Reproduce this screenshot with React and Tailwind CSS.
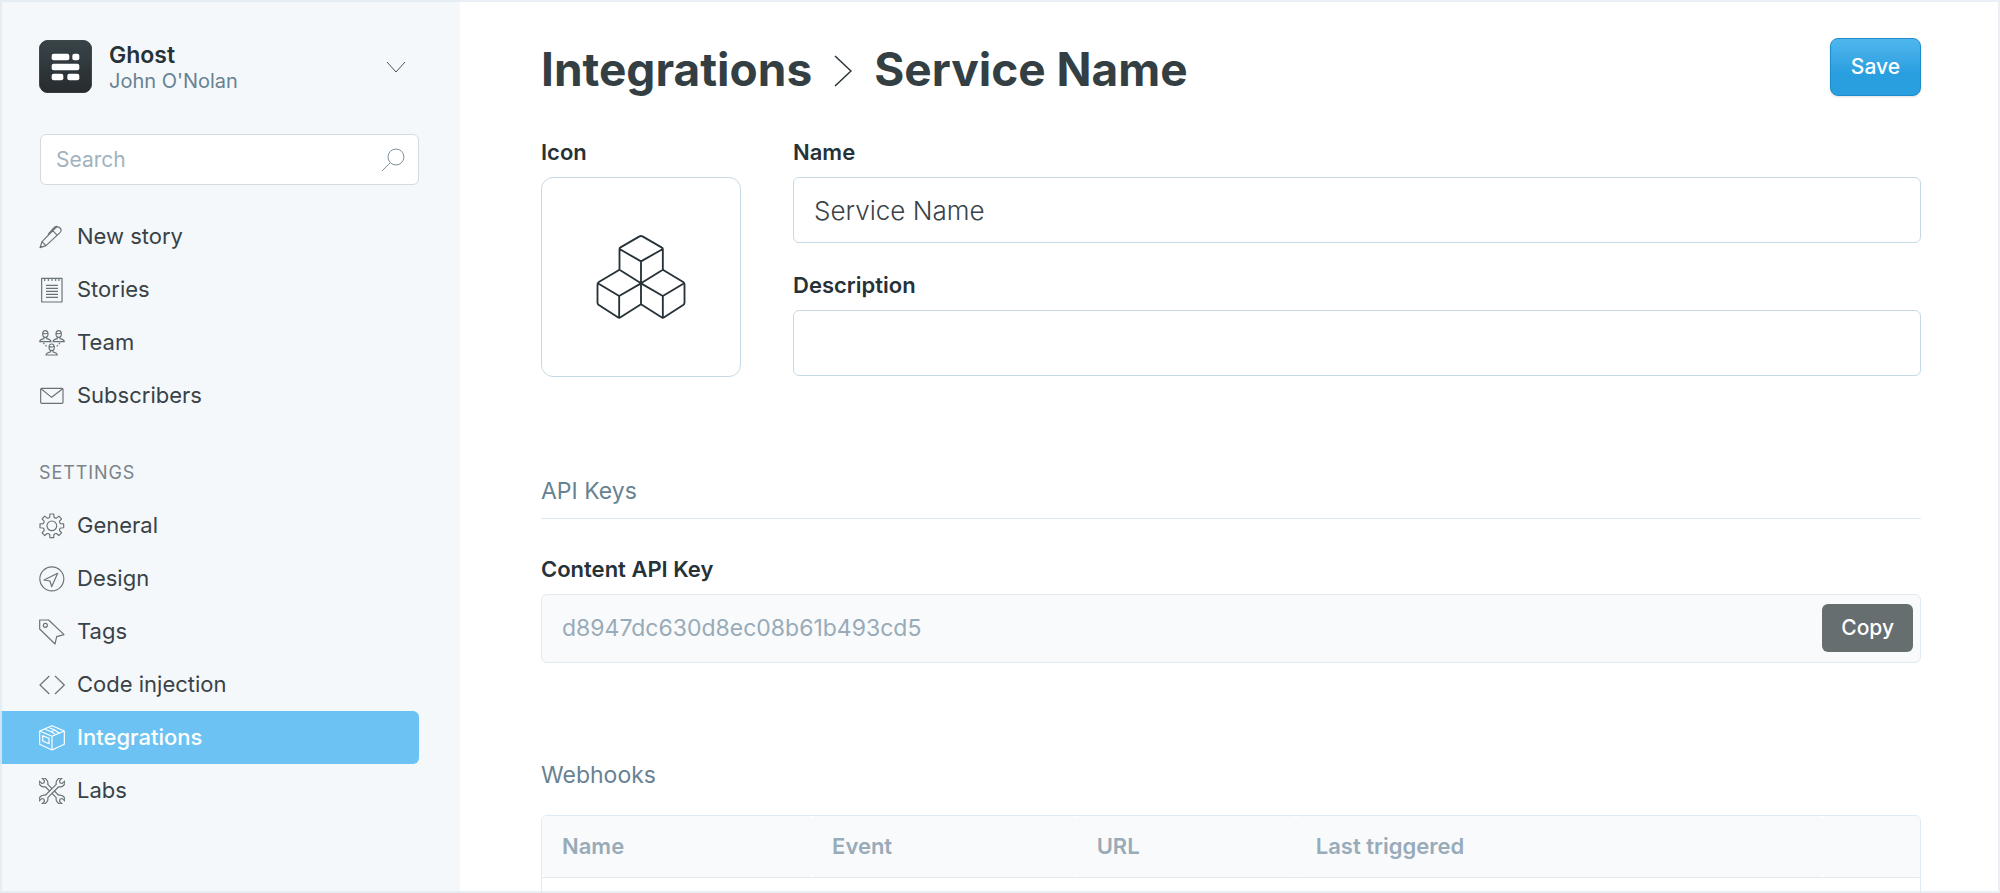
import React from "react";

const gearPath = (() => {
  const c = 38.5;
  const steps = [];
  for (let i = 0; i < 8; i++) {
    const a = (i * Math.PI) / 4;
    const pt = (r, d) =>
      `${(c + r * Math.sin(a + d)).toFixed(1)} ${(c - r * Math.cos(a + d)).toFixed(1)}`;
    steps.push(
      `${i ? "L" : "M"}${pt(27, -0.24)}L${pt(36, -0.16)}L${pt(36, 0.16)}L${pt(27, 0.24)}Q${pt(24, 0.39)} ${pt(27, 0.545)}`
    );
  }
  return steps.join("") + "Z";
})();

const person = (x, y) => (
  <g transform={`translate(${x} ${y})`}>
    <ellipse cx="0" cy="-6" rx="8" ry="10" />
    <path d="M-8 -8Q0 -5 8 -9M-4 4V8Q-16 10 -17 17H17Q16 10 4 8V4" />
  </g>
);

const wrench =
  "M-5 -23C-15 -29 -15 -43 -6 -49V-38L0 -34L6 -38V-49C15 -43 15 -29 5 -23V23C15 29 15 43 6 49V38L0 34L-6 38V49C-15 43 -15 29 -5 23Z";

const drawings = {
  pen: (
    <path d="M3 71L9 53L49 12Q56 5 63 12Q70 19 63 26L21 65ZM9 53L21 65M41 20L55 34M27 31L45 11Q50 5 57 8M3 71L8 66" />
  ),
  notebook: (
    <path d="M8 4H69V75H8ZM17 4V12M28 4V12M39 4V12M50 4V12M60 4V12M21 25H57M21 34H57M21 43H57M21 52H57M21 61H57" />
  ),
  team: (
    <>
      {person(19, 18)}
      {person(59, 18)}
      {person(38, 58)}
      <path d="M13 39L23 49M63 39L53 49" strokeDasharray="5 4" />
    </>
  ),
  mail: (
    <>
      <rect x="5" y="16" width="67" height="45" rx="3" />
      <path d="M7 18L38 43L70 18" />
    </>
  ),
  gear: (
    <>
      <path d={gearPath} />
      <circle cx="38.5" cy="38.5" r="14.5" />
    </>
  ),
  compass: (
    <>
      <circle cx="38.5" cy="38.5" r="36" />
      <path d="M56 22L15 42L33 45L38 62Z" />
    </>
  ),
  tag: (
    <>
      <path d="M2 3H29L75 47L53 53L48 75L2 30Z" />
      <circle cx="19" cy="19" r="6" />
    </>
  ),
  code: <path d="M31 12L3 39L31 66M48 12L76 39L48 66" />,
  box: (
    <path d="M39 2L76 18V58L39 75L2 58V18ZM2 18L39 34L76 18M39 34V75M17 12L37 20L50 29M28 7L47 15L61 25M37 20L47 15M11 32L30 40V56L11 48Z" />
  ),
  tools: (
    <>
      <path d={wrench} transform="translate(39 39) rotate(-45)" />
      <path d={wrench} transform="translate(39 39) rotate(45)" className="fill-[#f4f8fb]" />
    </>
  ),
};

function NavIcon({ name }) {
  return (
    <svg
      viewBox="0 0 78 78"
      className="size-[26px] shrink-0"
      fill="none"
      stroke="currentColor"
      strokeWidth="3.5"
      strokeLinejoin="round"
      aria-hidden="true"
    >
      {drawings[name]}
    </svg>
  );
}

function NavItem({ icon, label, active }) {
  return (
    <li>
      <a
        href="#"
        aria-current={active ? "page" : undefined}
        className={
          active
            ? "flex h-[53px] items-center gap-3 rounded-r-md bg-[#6cc3f3] pl-[39px] font-medium text-white"
            : "flex h-[53px] items-center gap-3 pl-[39px] text-[#394247]"
        }
      >
        <span className={active ? "text-white" : "text-[#697277]"}>
          <NavIcon name={icon} />
        </span>
        {label}
      </a>
    </li>
  );
}

const mainNav = [
  ["pen", "New story"],
  ["notebook", "Stories"],
  ["team", "Team"],
  ["mail", "Subscribers"],
];

const settingsNav = [
  ["gear", "General"],
  ["compass", "Design"],
  ["tag", "Tags"],
  ["code", "Code injection"],
  ["box", "Integrations"],
  ["tools", "Labs"],
];

function Sidebar() {
  return (
    <aside className="w-[460px] shrink-0 bg-[#f4f8fb] pr-[41px] pt-[39px] text-[22px]">
      <button type="button" className="flex w-full items-center pr-[13px] pl-[39px] text-left">
        <svg viewBox="0 0 159 159" className="size-[53px] shrink-0" aria-hidden="true">
          <defs>
            <linearGradient id="logo" x1="0" y1="0" x2="0" y2="1">
              <stop offset="0" stopColor="#394448" />
              <stop offset="1" stopColor="#262b2f" />
            </linearGradient>
          </defs>
          <rect x="1" y="1" width="157" height="157" rx="26" fill="url(#logo)" stroke="#1c2225" strokeWidth="2" />
          <g fill="#fff">
            <rect x="38" y="41" width="53" height="20" rx="6" />
            <rect x="100" y="41" width="21" height="20" rx="6" />
            <rect x="38" y="71" width="83" height="20" rx="6" />
            <rect x="38" y="101" width="35" height="20" rx="6" />
            <rect x="85" y="101" width="36" height="20" rx="6" />
          </g>
        </svg>
        <span className="ml-[17px] grow pt-[3px]">
          <span className="block text-[23px] leading-[26px] font-semibold text-[#263238]">Ghost</span>
          <span className="block text-[20px] leading-[26px] text-[#688292]">John O'Nolan</span>
        </span>
        <svg viewBox="0 0 20 12" className="h-3 w-5" fill="none" stroke="#4a5459" aria-hidden="true">
          <path d="M1 1L10 11L19 1" />
        </svg>
      </button>

      <div className="mt-[40px] ml-10 flex h-[51px] items-center rounded-md border border-[#d5dbdf] bg-white pr-[13px] pl-[15px]">
        <input
          type="text"
          aria-label="Search"
          placeholder="Search"
          className="min-w-0 grow text-[21px] outline-none placeholder:text-[#a1b3bf]"
        />
        <svg viewBox="0 0 24 24" className="size-6" fill="none" stroke="#7d8f9b" aria-hidden="true">
          <circle cx="15" cy="9" r="8" />
          <path d="M9 15L1 23" />
        </svg>
      </div>

      <nav className="mt-[25px]">
        <ul>
          {mainNav.map(([icon, label]) => (
            <NavItem key={label} icon={icon} label={label} />
          ))}
        </ul>
        <h2 className="mt-[38px] mb-[13px] pl-[39px] text-[18px] leading-[26px] tracking-wider text-[#7a8388] uppercase">
          Settings
        </h2>
        <ul>
          {settingsNav.map(([icon, label]) => (
            <NavItem key={label} icon={icon} label={label} active={label === "Integrations"} />
          ))}
        </ul>
      </nav>
    </aside>
  );
}

function CubesIcon() {
  return (
    <svg
      viewBox="228.5 226 270 252"
      className="h-[84px] w-[90px]"
      fill="none"
      stroke="#263238"
      strokeWidth="5.5"
      strokeLinejoin="round"
      aria-hidden="true"
    >
      <path d="M299 268Q299 265 302 263L359 230Q363.500 228 368 230L425 263Q429 265 429 268L363.500 305ZM299 268V330L363.500 371L429 330V268M363.500 305V371" />
      <path d="M299 330L237 367Q233 370 233 374V429Q233 433 237 436L294 473Q298 476 302 473L363.500 434V371L298 409L234 371M298 409V474" />
      <path d="M429 330L490 367Q494 370 494 374V429Q494 433 490 436L433 473Q429 476 425 473L363.500 434M363.500 371L429 409L493 371M429 409V474" />
    </svg>
  );
}

const labelClass = "block text-[22px] leading-[26px] font-semibold text-[#263238]";
const inputClass =
  "mt-3 h-[66px] w-full rounded-md border border-[#c6d9e6] bg-white px-5 text-[26px] font-light text-[#394247] outline-none";

export default function App() {
  return (
    <div className="relative flex h-screen overflow-hidden bg-white font-['Inter',sans-serif] after:pointer-events-none after:absolute after:inset-0 after:border-2 after:border-[#e4ebf1]/80">
      <Sidebar />
      <main className="min-w-0 grow overflow-hidden pt-[38px] pr-[79px] pl-[81px]">
        <header className="flex items-start justify-between">
          <h1 className="flex items-center text-[46px] leading-[62px] font-bold text-[#343f44]">
            <a href="#">Integrations</a>
            <svg viewBox="0 0 18 32" className="mx-[22px] mt-1 h-8 w-[18px]" fill="none" stroke="#263238" strokeWidth="1.5" aria-hidden="true">
              <path d="M1 1L17 16L1 31" />
            </svg>
            Service Name
          </h1>
          <button
            type="button"
            className="h-[58px] rounded-lg border border-[#1f8ccb] bg-linear-to-b from-[#4fb7ee] to-[#2a9fe0] to-60% px-5 text-[21px] font-medium text-white shadow-sm"
          >
            Save
          </button>
        </header>

        <section className="mt-[39px] flex gap-[52px]">
          <div>
            <span className={labelClass}>Icon</span>
            <button
              type="button"
              aria-label="Upload icon"
              className="mt-3 flex size-[200px] items-center justify-center rounded-xl border border-[#c6d9e6]"
            >
              <CubesIcon />
            </button>
          </div>
          <div className="grow">
            <label htmlFor="name" className={labelClass}>
              Name
            </label>
            <input id="name" type="text" defaultValue="Service Name" className={inputClass} />
            <label htmlFor="description" className={labelClass + " mt-[29px]"}>
              Description
            </label>
            <input id="description" type="text" className={inputClass} />
          </div>
        </section>

        <section className="mt-[101px]">
          <h2 className="border-b border-[#dfe9f0] pb-[14px] text-[23px] leading-[26px] text-[#688292]">API Keys</h2>
          <label htmlFor="content-key" className={labelClass + " mt-[37px]"}>
            Content API Key
          </label>
          <div className="mt-3 flex h-[69px] items-center rounded-md border border-[#dfebf2] bg-[#f8fafc] pr-[7px] pl-5">
            <input
              id="content-key"
              type="text"
              readOnly
              value="d8947dc630d8ec08b61b493cd5"
              className="min-w-0 grow text-[23px] text-[#98abb8] outline-none"
            />
            <button type="button" className="mb-px h-12 rounded-md bg-[#666e70] px-[19px] text-[21px] font-medium text-white">
              Copy
            </button>
          </div>
        </section>

        <section className="mt-[99px]">
          <h2 className="text-[23px] leading-[26px] text-[#688292]">Webhooks</h2>
          <div className="mt-[27px] overflow-hidden rounded-md border border-[#dfebf2]">
            <table className="w-full table-fixed border-separate border-spacing-0 text-left">
              <thead>
                <tr className="text-[22px] text-[#98abb8] *:h-[61px] *:rounded-sm *:bg-[#f8fafc] *:pl-5 *:font-semibold">
                  <th className="w-[19.6%]">Name</th>
                  <th className="w-[19.2%]">Event</th>
                  <th className="w-[15.9%]">URL</th>
                  <th className="w-[38.2%]">Last triggered</th>
                  <th aria-label="Actions"></th>
                </tr>
              </thead>
              <tbody>
                <tr>
                  <td colSpan="5" className="h-[60px] border-t border-[#dfebf2]"></td>
                </tr>
              </tbody>
            </table>
          </div>
        </section>
      </main>
    </div>
  );
}
